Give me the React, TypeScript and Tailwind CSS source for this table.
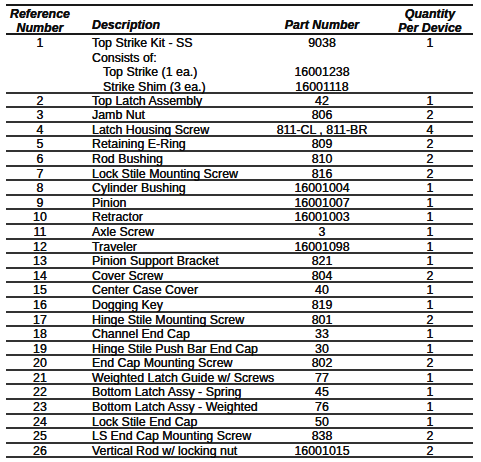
import React from "react";

const rows: [string, string, string, string][] = [
  ["2", "Top Latch Assembly", "42", "1"],
  ["3", "Jamb Nut", "806", "2"],
  ["4", "Latch Housing Screw", "811-CL , 811-BR", "4"],
  ["5", "Retaining E-Ring", "809", "2"],
  ["6", "Rod Bushing", "810", "2"],
  ["7", "Lock Stile Mounting Screw", "816", "2"],
  ["8", "Cylinder Bushing", "16001004", "1"],
  ["9", "Pinion", "16001007", "1"],
  ["10", "Retractor", "16001003", "1"],
  ["11", "Axle Screw", "3", "1"],
  ["12", "Traveler", "16001098", "1"],
  ["13", "Pinion Support Bracket", "821", "1"],
  ["14", "Cover Screw", "804", "2"],
  ["15", "Center Case Cover", "40", "1"],
  ["16", "Dogging Key", "819", "1"],
  ["17", "Hinge Stile Mounting Screw", "801", "2"],
  ["18", "Channel End Cap", "33", "1"],
  ["19", "Hinge Stile Push Bar End Cap", "30", "1"],
  ["20", "End Cap Mounting Screw", "802", "2"],
  ["21", "Weighted Latch Guide w/ Screws", "77", "1"],
  ["22", "Bottom Latch Assy - Spring", "45", "1"],
  ["23", "Bottom Latch Assy - Weighted", "76", "1"],
  ["24", "Lock Stile End Cap", "50", "1"],
  ["25", "LS End Cap Mounting Screw", "838", "2"],
  ["26", "Vertical Rod w/ locking nut", "16001015", "2"],
];

export default function App() {
  return (
    <div
      className="w-[481px] h-[462px] bg-white text-[#0d0d0d] overflow-hidden [text-shadow:0_0_0.5px_#000]"
      style={{ fontFamily: '"Liberation Sans", Arial, sans-serif' }}
    >
      <div className="ml-[6px] w-[467px] mt-[4px] border-t-2 border-[#1a1a1a] text-[12.4px]">
        {/* header */}
        <div className="flex h-[29px] border-b-2 border-[#1a1a1a] font-bold italic leading-[14px] pt-[1px]">
          <div className="w-[68px] flex flex-col items-center">
            <span>Reference</span>
            <span>Number</span>
          </div>
          <div className="w-[198px] pl-[18px] flex flex-col justify-end pb-[1px]">
            <span>Description</span>
          </div>
          <div className="w-[100px] flex flex-col items-center justify-end pb-[1px]">
            <span>Part Number</span>
          </div>
          <div className="ml-[16px] w-[84px] flex flex-col items-center">
            <span>Quantity</span>
            <span>Per Device</span>
          </div>
        </div>
        {/* row 1 */}
        <div className="flex h-[58.6px] border-b-2 border-[#333] leading-[14.6px] pt-[1px] whitespace-nowrap">
          <div className="w-[68px] flex flex-col items-center">
            <span>1</span>
          </div>
          <div className="w-[198px] pl-[18px] flex flex-col">
            <span>Top Strike Kit - SS</span>
            <span>Consists of:</span>
            <span className="pl-[11px]">Top Strike (1 ea.)</span>
            <span className="pl-[11px]">Strike Shim (3 ea.)</span>
          </div>
          <div className="w-[100px] flex flex-col items-center">
            <span>9038</span>
            <span>&nbsp;</span>
            <span>16001238</span>
            <span>16001118</span>
          </div>
          <div className="ml-[16px] w-[84px] flex flex-col items-center">
            <span>1</span>
          </div>
        </div>
        {rows.map(([n, d, p, q]) => (
          <div
            key={n}
            className="flex h-[14.6px] border-b-2 border-[#333] leading-[13px] pt-[1px] whitespace-nowrap"
          >
            <div className="w-[68px] text-center">{n}</div>
            <div className="w-[198px] pl-[18px]">{d}</div>
            <div className="w-[100px] text-center">{p}</div>
            <div className="ml-[16px] w-[84px] text-center">{q}</div>
          </div>
        ))}
      </div>
    </div>
  );
}
